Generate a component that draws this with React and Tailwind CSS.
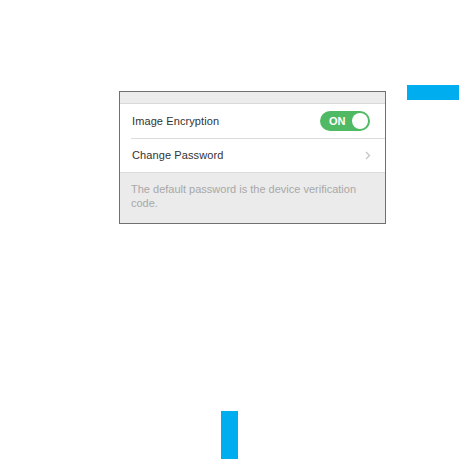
export default function App() {
  return (
    <div className="h-[459px] w-[459px] overflow-hidden bg-white font-['Liberation_Sans',Arial,sans-serif]">
      <div className="flex items-start pt-[85px]">
        <div className="ml-[119px] mt-[6px] w-[267px] border border-[#707070] bg-[#ebebeb]">
          <div className="h-[12px] border-b border-[#d9d9d9] bg-[#ececec]" />
          <div className="bg-white">
            <div className="flex h-[34px] items-center justify-between pl-[12px] pr-[15px]">
              <span className="text-[11px] tracking-[0.1px] text-[#333]">Image Encryption</span>
              <div className="flex h-[20px] w-[50px] items-center justify-between rounded-full bg-[#4fb964] pl-[9px] pr-[2px]">
                <span className="text-[11px] font-bold text-white">ON</span>
                <span className="h-[16px] w-[16px] rounded-full bg-white" />
              </div>
            </div>
            <div className="ml-[11px] h-px bg-[#dcdcdc]" />
            <div className="flex h-[33px] items-center justify-between pl-[12px] pr-[14px]">
              <span className="text-[11px] tracking-[0.1px] text-[#333]">Change Password</span>
              <svg width="6" height="9" viewBox="0 0 6 9" fill="none">
                <path d="M1 1l3.5 3.5L1 8" stroke="#c2c2c2" strokeWidth="1.2" />
              </svg>
            </div>
          </div>
          <div className="border-t border-[#dcdcdc] px-[11px] pt-[9px] pb-[13px] text-[11px] leading-[14px] text-[#a8a8a8]">
            The default password is the device verification code.
          </div>
        </div>
        <div className="ml-[21px] h-[15px] w-[52px] bg-[#00aeef]" />
      </div>
      <div className="ml-[221px] mt-[187px] h-[50px] w-[17px] bg-[#00aeef]" />
    </div>
  )
}
